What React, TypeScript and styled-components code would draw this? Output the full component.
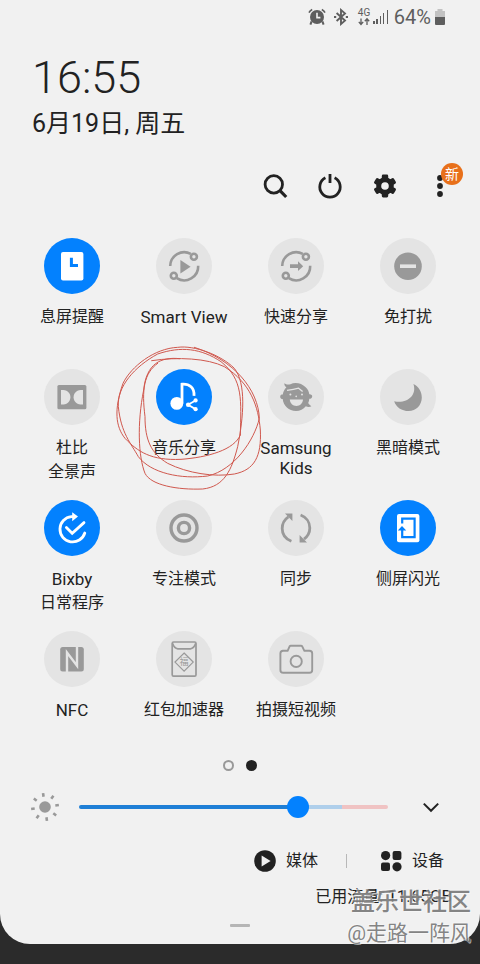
import React, { useState } from "react";
import styled, { createGlobalStyle } from "styled-components";

const INK = "#222222";
const PANEL = "#f1f1f1";
const BLUE = "#0381fe";
const IDLE = "#e4e4e4";
const GREY = "#999999";
const FONT = `Roboto, "Noto Sans CJK SC", sans-serif`;

const GlobalStyle = createGlobalStyle`
  *, *::before, *::after { box-sizing: border-box; }
  body {
    margin: 0;
    background: #2b2b2b;
    color: ${INK};
    font-family: ${FONT};
    font-size: 16px;
  }
  button {
    font: inherit;
    color: inherit;
    background: none;
    border: 0;
    padding: 0;
    cursor: pointer;
  }
  svg { display: block; }
`;

const Screen = styled.div`
  position: relative;
  min-height: 100vh;
  padding-bottom: 20px;
  overflow: hidden;
`;

const Panel = styled.main`
  background: ${PANEL};
  border-radius: 0 0 30px 30px;
`;

const StatusBar = styled.header`
  display: flex;
  justify-content: flex-end;
  align-items: center;
  height: 34px;
  padding-right: 34px;
  color: #5e5e5e;
`;

const StatusIcon = styled.svg<{ $gap: number }>`
  flex: none;
  margin-right: ${(p) => p.$gap}px;
`;

const BatteryLevel = styled.span`
  font-size: 20px;
  line-height: 24px;
  margin-right: 3px;
`;

const Clock = styled.section`
  padding: 16px 32px 0;
`;

const Time = styled.h1`
  margin: 0;
  font-size: 45px;
  font-weight: 300;
  line-height: 56px;
`;

const DateLine = styled.p`
  margin: 0;
  font-size: 25px;
  line-height: 36px;
`;

const Actions = styled.nav`
  display: flex;
  justify-content: flex-end;
  padding: 16px 13px 0 0;
`;

const ActionButton = styled.button`
  position: relative;
  display: grid;
  place-items: center;
  width: 55px;
  height: 56px;
`;

const Badge = styled.span`
  position: absolute;
  top: 5px;
  left: 29px;
  width: 22px;
  height: 22px;
  border-radius: 50%;
  background: #e8701a;
  color: #fff;
  font-size: 14px;
  line-height: 22px;
  text-align: center;
`;

const TileGrid = styled.section`
  display: grid;
  grid-template-columns: repeat(4, 1fr);
  grid-auto-rows: minmax(116px, auto);
  row-gap: 15px;
  padding: 24px 16px 0;
`;

const TileButton = styled.button`
  position: relative;
  display: flex;
  flex-direction: column;
  align-items: center;
`;

const TileDisc = styled.span<{ $on: boolean }>`
  width: 56px;
  height: 56px;
  border-radius: 50%;
  background: ${(p) => (p.$on ? BLUE : IDLE)};
  color: ${(p) => (p.$on ? "#ffffff" : GREY)};
  --disc: ${(p) => (p.$on ? BLUE : IDLE)};
`;

const TileLabel = styled.span<{ $tight: boolean }>`
  display: flex;
  flex-direction: column;
  margin-top: ${(p) => (p.$tight ? 13 : 11)}px;
  line-height: ${(p) => (p.$tight ? 20 : 24)}px;
  white-space: nowrap;
`;

const LabelLine = styled.span<{ $latin: boolean }>`
  font-size: ${(p) => (p.$latin ? 17 : 16)}px;
`;

const Scribble = styled.svg`
  position: absolute;
  top: -25px;
  left: 50%;
  margin-left: -69px;
  pointer-events: none;
`;

const Pager = styled.div`
  display: flex;
  justify-content: center;
  gap: 12px;
  padding-top: 13px;
`;

const PageDot = styled.button<{ $current: boolean }>`
  width: 11px;
  height: 11px;
  border-radius: 50%;
  border: 2px solid ${(p) => (p.$current ? INK : GREY)};
  background: ${(p) => (p.$current ? INK : "transparent")};
`;

const BrightnessRow = styled.div`
  display: flex;
  align-items: center;
  height: 40px;
  margin-top: 16px;
  padding: 0 37px 0 30px;
`;

const BrightnessSlider = styled.input<{ $percent: number }>`
  flex: 1;
  min-width: 0;
  height: 24px;
  margin: 0 31px 0 19px;
  appearance: none;
  background: transparent;
  &::-webkit-slider-runnable-track {
    height: 4px;
    border-radius: 2px;
    background: linear-gradient(
      to right,
      #1f7fd6 ${(p) => p.$percent}%,
      #afcfeb ${(p) => p.$percent}%,
      #afcfeb 85%,
      #f0c3c3 85%
    );
  }
  &::-webkit-slider-thumb {
    appearance: none;
    width: 22px;
    height: 22px;
    margin-top: -9px;
    border-radius: 50%;
    background: ${BLUE};
  }
`;

const Outputs = styled.div`
  display: flex;
  justify-content: flex-end;
  align-items: center;
  height: 40px;
  margin-top: 14px;
  padding-right: 36px;
`;

const OutputButton = styled.button`
  display: flex;
  align-items: center;
  gap: 10px;
  line-height: 24px;
`;

const Divider = styled.span`
  width: 1px;
  height: 14px;
  margin: 0 33px 0 28px;
  background: #b8b8b8;
`;

const Usage = styled.p`
  margin: 3px 28px 0 0;
  line-height: 24px;
  text-align: right;
`;

const Amount = styled.span`
  font-size: 17px;
`;

const Handle = styled.div`
  width: 20px;
  height: 3px;
  margin: 15px auto 0;
  border-radius: 1px;
  background: #b5b5b5;
`;

const PanelFoot = styled.div`
  height: 17px;
`;

const Watermark = styled.div`
  position: absolute;
  right: 9px;
  bottom: 16px;
  text-align: right;
  color: rgba(112, 112, 112, 0.85);
  text-shadow: 1px 1px 0 rgba(250, 250, 250, 0.6), -1px -1px 0 rgba(250, 250, 250, 0.6);
  pointer-events: none;
`;

const Community = styled.div`
  font-size: 24px;
  font-weight: 500;
  line-height: 32px;
`;

const Author = styled.div`
  font-size: 21px;
  line-height: 30px;
`;

const Glyph = ({ children }: { children: React.ReactNode }) => (
  <svg width="56" height="56" viewBox="0 0 56 56" fill="none" aria-hidden="true">
    {children}
  </svg>
);

const Orbit = () => (
  <g stroke="currentColor" strokeWidth="2.6">
    <path d="M14.2 28A14 14 0 0 1 34.8 15.9" />
    <circle cx="37.9" cy="18.7" r="3" />
    <circle cx="17.8" cy="37.8" r="3" />
    <path d="M20.8 40.2A14 14 0 0 0 42.2 27.8" />
  </g>
);

const icons: Record<string, React.ReactNode> = {
  aod: (
    <>
      <rect x="17" y="14" width="22.4" height="28.4" rx="2" fill="currentColor" />
      <path d="M27.4 19.8V27.6H34" stroke="var(--disc)" strokeWidth="3" />
    </>
  ),
  smartView: (
    <>
      <Orbit />
      <path d="M24.4 22V35.4L34.6 28.7Z" fill="currentColor" />
    </>
  ),
  quickShare: (
    <>
      <Orbit />
      <path d="M22 26.2H30V23.2L35.2 28.2L30 33V30H22Z" fill="currentColor" />
    </>
  ),
  dnd: (
    <>
      <circle cx="28" cy="28.2" r="13.8" fill="currentColor" />
      <rect x="20" y="26.4" width="16" height="3.6" fill="var(--disc)" />
    </>
  ),
  dolby: (
    <>
      <rect x="13.4" y="16" width="29" height="24.2" rx="1.5" fill="currentColor" />
      <path d="M17 21H19.4C24 21.4 26.4 24.6 26.4 28.2S24 35 19.4 35.4H17Z" fill="var(--disc)" />
      <path d="M39 21H36.6C32 21.4 29.6 24.6 29.6 28.2S32 35 36.6 35.4H39Z" fill="var(--disc)" />
    </>
  ),
  music: (
    <>
      <circle cx="20.8" cy="34.4" r="6.4" fill="currentColor" />
      <path
        d="M26 34.5V15.2C33.5 14.6 38.6 19 38 26.8"
        stroke="currentColor"
        strokeWidth="2.8"
      />
      <path d="M40 31.2L32 35.8L40 40.4" stroke="currentColor" strokeWidth="1.8" />
      <g fill="currentColor">
        <circle cx="39.6" cy="31.4" r="2.1" />
        <circle cx="32.2" cy="35.8" r="2.3" />
        <circle cx="39.6" cy="40.2" r="2.1" />
      </g>
    </>
  ),
  kids: (
    <>
      <path
        d="M16.4 14.2C18 15.6 20 16 22.4 15.2C27.5 12.6 34 14.6 37.4 18C40 20.4 41 22.8 41.3 25.2C43 25 44.4 26 44.2 27.4C44 29 42.6 30 41.3 29.8C41.2 31.4 40.8 32.8 40.2 34C41 35.4 42.2 36.4 43.4 37.2C41.6 38.2 39.4 38 37.8 37.2C35.4 40.2 32 42 28 42C20.8 42 15.4 36.8 14.7 30C13 30 12 28.8 12.2 27.4C12.4 26 13.6 25.4 14.8 25.6C15.2 22.6 16.6 20 18.4 18.2C16.8 17.2 16.2 15.8 16.4 14.2Z"
        fill="currentColor"
      />
      <path d="M19 21.4C23.4 21 27 20.4 30.6 19.2L34.6 22.6" stroke="var(--disc)" strokeWidth="1.3" />
      <path d="M21.8 30.6H35C34.6 34.6 32 37 28.4 37S22.2 34.6 21.8 30.6Z" fill="var(--disc)" />
      <g fill="var(--disc)">
        <circle cx="22.4" cy="25.6" r="1" />
        <circle cx="34" cy="25.6" r="1" />
        <circle cx="28.2" cy="27.4" r="0.8" />
      </g>
    </>
  ),
  moon: (
    <path
      d="M33.4 15C38.6 17.4 41.8 22.6 41.8 28.4C41.8 36 36 42 28.6 42C21.8 42 16 38.2 14.2 32.2C26.6 35 37.4 26.6 33.4 15Z"
      fill="currentColor"
    />
  ),
  bixby: (
    <>
      <path
        d="M29 16.6H27.4A12.7 12.7 0 1 0 40.8 33"
        stroke="currentColor"
        strokeWidth="2.8"
        strokeLinecap="round"
      />
      <path d="M28.2 12.2L34 16.6L28.2 21.2Z" fill="currentColor" />
      <path
        d="M22.4 27.4L28.2 33.2L40 22.6"
        stroke="currentColor"
        strokeWidth="2.8"
        strokeLinecap="round"
      />
    </>
  ),
  focus: (
    <g stroke="currentColor" strokeWidth="3.4">
      <circle cx="28" cy="28" r="13" />
      <circle cx="28" cy="28" r="5.6" />
    </g>
  ),
  sync: (
    <>
      <path
        d="M23.4 41.2C17.8 39 14.2 34.2 14.2 28.4C14.2 23.4 16.6 19.4 20.4 16.8M32.6 15C38 17 41.8 22 41.8 28C41.8 32.4 39.6 36.4 36 39.2"
        stroke="currentColor"
        strokeWidth="2.8"
      />
      <path d="M17 13.6H24.4V21ZM31.6 42.4H39L31.6 35Z" fill="currentColor" />
    </>
  ),
  edge: (
    <>
      <rect x="17" y="14" width="22.4" height="28.2" rx="2" fill="currentColor" />
      <path d="M22.2 23.6V18.6H34.6V37.2H22.2V29" stroke="var(--disc)" strokeWidth="2.2" />
      <path d="M17.8 30.6L22 26L26.2 30.6Z" fill="var(--disc)" />
    </>
  ),
  nfc: (
    <>
      <rect x="16.2" y="16" width="23.6" height="24.4" rx="2.5" fill="currentColor" />
      <path d="M23 41V21.6L33 34.8V15.4" stroke="var(--disc)" strokeWidth="2.4" />
    </>
  ),
  packet: (
    <>
      <rect x="16.2" y="11" width="23.8" height="34.2" rx="1.4" stroke="currentColor" strokeWidth="1.7" />
      <path
        d="M16.6 12.6C17.6 15.6 19.2 17.6 21.8 17.8H34.4C37 17.6 38.6 15.6 39.6 12.6"
        stroke="currentColor"
        strokeWidth="1.7"
      />
      <path d="M28.1 22L37.2 31.1L28.1 40.2L19 31.1Z" stroke="currentColor" strokeWidth="1.2" />
      <text x="28" y="34.4" fontSize="9" textAnchor="middle" fill="currentColor">
        福
      </text>
    </>
  ),
  camera: (
    <>
      <path
        d="M14.6 19.8H19.6L21.6 15.4Q22 14.8 22.8 14.8H33Q33.8 14.8 34.2 15.4L36.4 19.8H41.4Q44.2 19.8 44.2 22.6V39Q44.2 41.8 41.4 41.8H15.2Q12.4 41.8 12.4 39V22.6Q12.4 19.8 15.2 19.8Z"
        stroke="currentColor"
        strokeWidth="1.9"
        strokeLinejoin="round"
      />
      <circle cx="28.2" cy="30.4" r="5.6" stroke="currentColor" strokeWidth="1.9" />
    </>
  ),
};

type Tile = { icon: string; lines: string[]; on?: boolean; circled?: boolean };

const tiles: Tile[] = [
  { icon: "aod", lines: ["息屏提醒"], on: true },
  { icon: "smartView", lines: ["Smart View"] },
  { icon: "quickShare", lines: ["快速分享"] },
  { icon: "dnd", lines: ["免打扰"] },
  { icon: "dolby", lines: ["杜比", "全景声"] },
  { icon: "music", lines: ["音乐分享"], on: true, circled: true },
  { icon: "kids", lines: ["Samsung", "Kids"] },
  { icon: "moon", lines: ["黑暗模式"] },
  { icon: "bixby", lines: ["Bixby", "日常程序"], on: true },
  { icon: "focus", lines: ["专注模式"] },
  { icon: "sync", lines: ["同步"] },
  { icon: "edge", lines: ["侧屏闪光"], on: true },
  { icon: "nfc", lines: ["NFC"] },
  { icon: "packet", lines: ["红包加速器"] },
  { icon: "camera", lines: ["拍摄短视频"] },
];

const PenCircles = () => (
  <Scribble
    width="148"
    height="148"
    viewBox="282 12 444 444"
    fill="none"
    stroke="#d0584e"
    strokeWidth="3"
    strokeLinecap="round"
    aria-hidden="true"
  >
    <path d="M476 56C420 50 376 70 368 150C348 250 352 350 372 400C390 436 470 450 545 447C610 440 632 390 650 320C668 230 676 130 640 85C600 45 520 15 470 22C400 25 330 80 306 130C278 210 284 260 312 295C350 335 390 362 480 358C560 352 640 330 658 285" />
    <path d="M658 285C660 180 668 120 600 65C540 25 480 18 410 42C340 80 288 140 292 200C300 280 330 310 352 350C390 400 480 418 560 408C640 390 700 300 715 235C712 150 640 60 520 22" />
    <path d="M392 62C470 50 560 55 610 80C690 130 712 200 718 270C722 350 700 390 640 402C580 412 500 400 440 370C390 340 372 300 372 230C362 150 368 100 410 70" />
  </Scribble>
);

const isLatin = (line: string) => /^[\x20-\x7e]+$/.test(line);

const TileItem = ({ tile }: { tile: Tile }) => {
  const [on, setOn] = useState(Boolean(tile.on));
  return (
    <TileButton type="button" aria-pressed={on} onClick={() => setOn(!on)}>
      <TileDisc $on={on}>
        <Glyph>{icons[tile.icon]}</Glyph>
      </TileDisc>
      <TileLabel $tight={tile.lines.length > 1 && tile.lines.every(isLatin)}>
        {tile.lines.map((line) => (
          <LabelLine key={line} $latin={isLatin(line)}>
            {line}
          </LabelLine>
        ))}
      </TileLabel>
      {tile.circled && <PenCircles />}
    </TileButton>
  );
};

const MAX_BRIGHTNESS = 255;
const gearTeeth = [0, 60, 120, 180, 240, 300];
const sunRays = [-8, 37, 82, 127, 172, 217, 262, 307];

export default function App() {
  const [level, setLevel] = useState(185);
  return (
    <>
      <GlobalStyle />
      <Screen>
        <Panel>
          <StatusBar>
            <StatusIcon $gap={7} width="18" height="18" viewBox="0 0 18 18" fill="none" aria-hidden="true">
              <circle cx="9" cy="9" r="7" fill="currentColor" />
              <path d="M3.6 13.4L2.4 16.6M14.4 13.4L15.6 16.6" stroke="currentColor" strokeWidth="2" />
              <path d="M1 4.6Q2 2.4 4.2 1.4M17 4.6Q16 2.4 13.8 1.4" stroke="currentColor" strokeWidth="1.6" />
              <path d="M9 4.8V9.6H12.4" stroke={PANEL} strokeWidth="1.6" />
            </StatusIcon>
            <StatusIcon $gap={8} width="16" height="18" viewBox="0 0 16 18" fill="none" aria-hidden="true">
              <path d="M3.6 5L12 12.6L8 16V2L12 5.4L3.6 13" stroke="currentColor" strokeWidth="1.9" />
              <path d="M1 9H3.2M12.8 9H15" stroke="currentColor" strokeWidth="2" />
            </StatusIcon>
            <StatusIcon $gap={2} width="14" height="18" viewBox="0 0 14 18" fill="none" aria-hidden="true">
              <text x="7" y="8" fontSize="10" textAnchor="middle" fill="currentColor">
                4G
              </text>
              <path
                d="M4 10.5V16M1.8 13.8L4 16.4L6.2 13.8M10 17V11.5M7.8 13.2L10 10.8L12.2 13.2"
                stroke="currentColor"
                strokeWidth="1.3"
              />
            </StatusIcon>
            <StatusIcon $gap={5} width="16" height="16" viewBox="0 0 16 16" fill="currentColor" aria-hidden="true">
              <rect x="0" y="12" width="2" height="3" />
              <rect x="3" y="10" width="2" height="5" />
              <rect x="7" y="7" width="1" height="8" />
              <rect x="10" y="4" width="1" height="11" />
              <rect x="14" y="1" width="1" height="14" />
            </StatusIcon>
            <BatteryLevel>64%</BatteryLevel>
            <svg width="12" height="18" viewBox="0 0 12 18" aria-hidden="true">
              <path d="M3.5 1H8.5V3H11V9H1V3H3.5Z" fill="#c2c2c2" />
              <path d="M1 9H11V16Q11 17 10 17H2Q1 17 1 16Z" fill="currentColor" />
            </svg>
          </StatusBar>

          <Clock>
            <Time>16:55</Time>
            <DateLine>6月19日, 周五</DateLine>
          </Clock>

          <Actions>
            <ActionButton type="button" aria-label="搜索">
              <svg width="26" height="26" viewBox="0 0 26 26" fill="none" stroke={INK} aria-hidden="true">
                <circle cx="11.8" cy="11.4" r="8.7" strokeWidth="2.8" />
                <path d="M18 17.6L24.2 24" strokeWidth="3.2" />
              </svg>
            </ActionButton>
            <ActionButton type="button" aria-label="电源">
              <svg width="26" height="26" viewBox="0 0 26 26" fill="none" stroke={INK} strokeWidth="2.8" aria-hidden="true">
                <path d="M8.4 4.8A10.2 10.2 0 1 0 17.6 4.8" />
                <path d="M13 1V10" />
              </svg>
            </ActionButton>
            <ActionButton type="button" aria-label="设置">
              <svg width="26" height="26" viewBox="0 0 26 26" fill={INK} aria-hidden="true">
                <circle cx="13" cy="13" r="8.8" />
                {gearTeeth.map((angle) => (
                  <rect key={angle} x="9.8" y="1.6" width="6.4" height="6" rx="1.4" transform={`rotate(${angle} 13 13)`} />
                ))}
                <circle cx="13" cy="13" r="3.8" fill={PANEL} />
              </svg>
            </ActionButton>
            <ActionButton type="button" aria-label="更多选项">
              <svg width="26" height="26" viewBox="0 0 26 26" fill={INK} aria-hidden="true">
                <circle cx="13" cy="5" r="2.9" />
                <circle cx="13" cy="13" r="2.9" />
                <circle cx="13" cy="21" r="2.9" />
              </svg>
              <Badge>新</Badge>
            </ActionButton>
          </Actions>

          <TileGrid>
            {tiles.map((tile) => (
              <TileItem key={tile.icon} tile={tile} />
            ))}
          </TileGrid>

          <Pager>
            <PageDot type="button" $current={false} aria-label="第 1 页" />
            <PageDot type="button" $current aria-label="第 2 页" />
          </Pager>

          <BrightnessRow>
            <svg width="30" height="30" viewBox="0 0 30 30" fill={GREY} aria-hidden="true">
              <circle cx="15" cy="15" r="5.8" />
              {sunRays.map((angle) => (
                <rect key={angle} x="13.7" y="1" width="2.6" height="3.6" transform={`rotate(${angle} 15 15)`} />
              ))}
            </svg>
            <BrightnessSlider
              type="range"
              min={0}
              max={MAX_BRIGHTNESS}
              value={level}
              $percent={Math.round((level / MAX_BRIGHTNESS) * 100)}
              onChange={(e) => setLevel(Number(e.target.value))}
              aria-label="亮度"
            />
            <button type="button" aria-label="展开">
              <svg width="24" height="24" viewBox="0 0 24 24" fill="none" stroke={INK} strokeWidth="2" aria-hidden="true">
                <path d="M4.8 8.6L12 15.8L19.2 8.6" />
              </svg>
            </button>
          </BrightnessRow>

          <Outputs>
            <OutputButton type="button">
              <svg width="22" height="22" viewBox="0 0 22 22" aria-hidden="true">
                <circle cx="11" cy="11" r="10.8" fill={INK} />
                <path d="M7.6 5.4V16.6L16.6 11Z" fill={PANEL} />
              </svg>
              媒体
            </OutputButton>
            <Divider />
            <OutputButton type="button">
              <svg width="22" height="22" viewBox="0 0 22 22" fill={INK} aria-hidden="true">
                <circle cx="5.6" cy="5.6" r="4.6" />
                <rect x="12.6" y="1" width="8.8" height="9" rx="2" />
                <rect x="1" y="12.4" width="9" height="8.6" rx="2" />
                <circle cx="17" cy="16.8" r="4.6" />
              </svg>
              设备
            </OutputButton>
          </Outputs>

          <Usage>
            已用流量: <Amount>11.65GB</Amount>
          </Usage>
          <Handle />
          <PanelFoot />
        </Panel>

        <Watermark>
          <Community>盖乐世社区</Community>
          <Author>@走路一阵风</Author>
        </Watermark>
      </Screen>
    </>
  );
}
